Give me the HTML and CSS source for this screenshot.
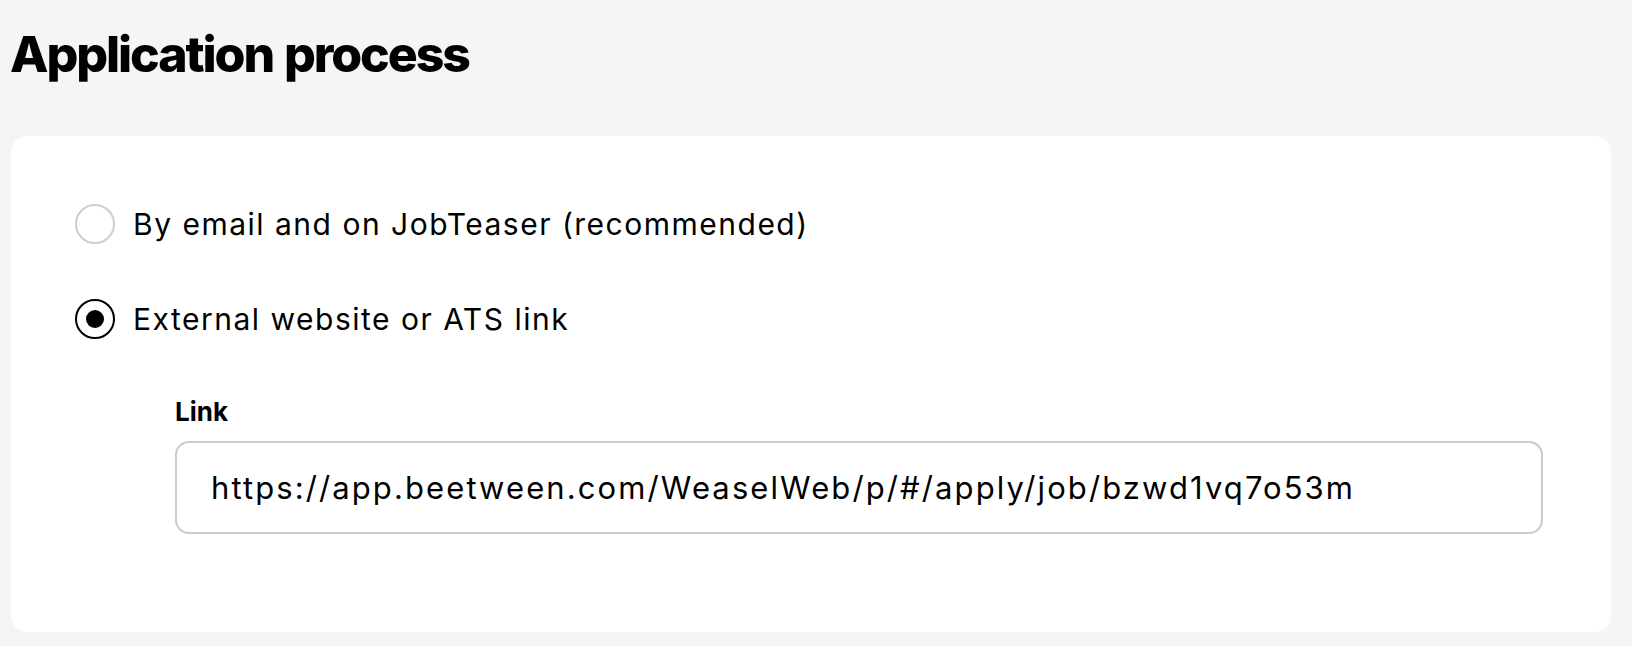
FILE: index.html
```html
<!DOCTYPE html>
<html lang="en">
<head>
<meta charset="utf-8">
<title>Application process</title>
<link rel="stylesheet" href="styles.css">
</head>
<body>
<main class="page">
  <h1 class="title">Application process</h1>
  <section class="card">
    <label class="option">
      <span class="radio"></span>
      <span class="option-text">By email and on JobTeaser (recommended)</span>
    </label>
    <label class="option">
      <span class="radio radio-checked"><span class="radio-dot"></span></span>
      <span class="option-text">External website or ATS link</span>
    </label>
    <div class="field">
      <label class="field-label" for="link">Link</label>
      <input class="field-input" id="link" type="text" readonly value="https://app.beetween.com/WeaselWeb/p/#/apply/job/bzwd1vq7o53m">
    </div>
  </section>
</main>
</body>
</html>
```

FILE: styles.css
```css
* { box-sizing: border-box; }

html, body {
  margin: 0;
  background: #f5f5f7;
}

body {
  font-family: "Inter", "Liberation Sans", sans-serif;
  color: #000;
}

.page {
  padding: 0 21px 14px 11px;
}

.title {
  margin: 0 0 0 -1px;
  padding: 29px 0 0 0;
  height: 136px;
  font-family: "Inter", "Liberation Sans", sans-serif;
  font-weight: 800;
  font-size: 50px;
  line-height: 1;
  letter-spacing: -2.1px;
  word-spacing: 2px;
}

.card {
  background: #fff;
  border-radius: 16px;
  height: 496px;
  padding: 68px 68px 0 64px;
  display: flex;
  flex-direction: column;
}

.option {
  display: flex;
  align-items: center;
  height: 40px;
  gap: 18px;
  font-size: 30px;
  letter-spacing: 1.5px;
  line-height: 1;
}

.option + .option {
  margin-top: 55px;
}

.radio {
  flex: none;
  width: 40px;
  height: 40px;
  border-radius: 50%;
  border: 2px solid #cdcdd1;
  display: flex;
  align-items: center;
  justify-content: center;
}

.radio-checked {
  border: 2.5px solid #000;
}

.radio-dot {
  width: 18px;
  height: 18px;
  border-radius: 50%;
  background: #000;
}

.field {
  margin: 58px 0 0 100px;
  display: flex;
  flex-direction: column;
  gap: 14px;
}

.field-label {
  font-size: 26px;
  font-weight: 700;
  line-height: 30px;
}

.field-input {
  width: 100%;
  height: 93px;
  border: 2px solid #cbcbcf;
  border-radius: 14px;
  padding: 0 0 0 34px;
  font-family: "Inter", "Liberation Sans", sans-serif;
  font-size: 31px;
  letter-spacing: 2.1px;
  color: #000;
  background: #fff;
  outline: none;
}
```
